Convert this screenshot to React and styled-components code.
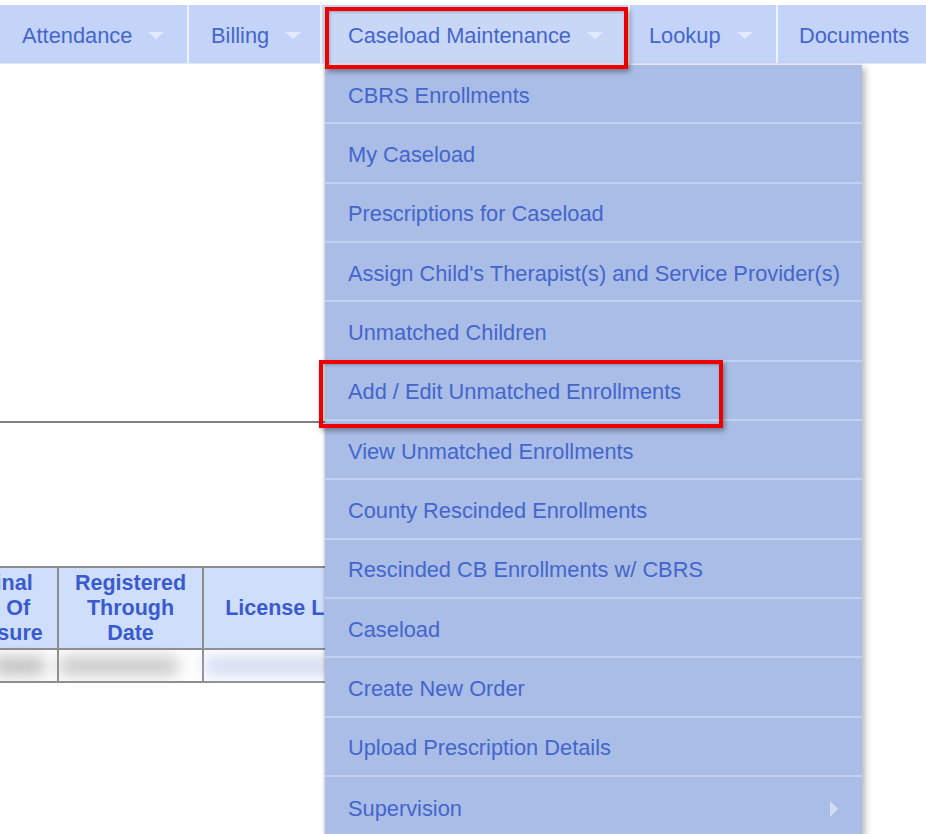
import styled, { createGlobalStyle } from 'styled-components';

const Global = createGlobalStyle`
    body {
        margin:0;
        background:#fff;
        font-family:"Liberation Sans", Arial, sans-serif;
    }
`
const Page = styled.div`
    position:relative;
    width:926px;
    height:834px;
    overflow:hidden;
    background:#fff;
`
const NavBar = styled.nav`
    margin-top:5px;
    height:58px;
    display:flex;
    gap:2px;
    background:#eef2fc;
    border-bottom:1px solid #dfe7fa;
`
const NavItem = styled.div`
    position:relative;
    box-sizing:border-box;
    flex:${props=>props.width ? `0 0 ${props.width}px` : '1'};
    display:flex;
    align-items:center;
    gap:16px;
    padding-left:${props=>props.pad || 22}px;
    padding-top:3px;
    background:${props=>props.active ? '#c9d7f7' : '#c4d4f8'};
    color:#4466cc;
    font-size:21.8px;
    white-space:nowrap;
`
const Caret = styled.span`
    width:0;
    height:0;
    border-left:8px solid transparent;
    border-right:8px solid transparent;
    border-top:7px solid #e3eafb;
`
const Highlight = styled.div`
    position:absolute;
    left:${props=>props.left}px;
    top:${props=>props.top}px;
    width:${props=>props.w}px;
    height:${props=>props.h}px;
    box-sizing:border-box;
    border:4px solid #ee0000;
    box-shadow:2px 3px 5px rgba(0,0,0,0.35), inset 1px 1px 3px rgba(0,0,0,0.25);
    pointer-events:none;
    z-index:3;
`
const Content = styled.main`
    padding-top:357px;
`
const Rule = styled.div`
    width:600px;
    height:2px;
    background:#7f7f7f;
`
const TableWrap = styled.div`
    margin-top:143px;
    overflow:hidden;
`
const Table = styled.table`
    margin-left:-75px;
    border-collapse:collapse;
    table-layout:fixed;
`
const Th = styled.th`
    width:${props=>props.width}px;
    height:82px;
    padding:0 4px;
    box-sizing:border-box;
    background:#cfdffb;
    border:2px solid #8c8c8c;
    color:#3a5ad0;
    font-size:21.5px;
    line-height:25px;
    font-weight:bold;
    text-align:center;
    white-space:${props=>props.nowrap ? 'nowrap' : 'normal'};
`
const Td = styled.td`
    height:31px;
    padding:0;
    border:2px solid #8c8c8c;
    border-top:none;
`
const Blur = styled.div`
    height:18px;
    margin:0 ${props=>props.right || 0}px 0 ${props=>props.left || 0}px;
    background:${props=>props.tone};
    filter:blur(8px);
    opacity:0.65;
`
const Menu = styled.ul`
    position:absolute;
    left:325px;
    top:65px;
    width:537px;
    margin:0;
    padding:0;
    list-style:none;
    background:#a9bde6;
    box-shadow:3px 3px 7px rgba(0,0,0,0.3), -1px 0 2px rgba(0,0,0,0.15);
    z-index:2;
`
const MenuItem = styled.li`
    position:relative;
    box-sizing:border-box;
    height:59.33px;
    display:flex;
    align-items:center;
    justify-content:space-between;
    padding:4px 24px 0 23px;
    border-bottom:2px solid #c3d1f1;
    color:#4466cc;
    font-size:21.8px;
    white-space:nowrap;
    &:last-child { border-bottom:none; }
`
const SubArrow = styled.span`
    width:0;
    height:0;
    border-top:8px solid transparent;
    border-bottom:8px solid transparent;
    border-left:8px solid #d3ddf5;
`

const navItems = [
    { label:'Attendance', width:187, caret:true },
    { label:'Billing', width:131, caret:true },
    { label:'Caseload Maintenance', width:306, caret:true, active:true, pad:26 },
    { label:'Lookup', width:146, caret:true, pad:19 },
    { label:'Documents', pad:21 },
]

const menuItems = [
    'CBRS Enrollments',
    'My Caseload',
    'Prescriptions for Caseload',
    "Assign Child's Therapist(s) and Service Provider(s)",
    'Unmatched Children',
    'Add / Edit Unmatched Enrollments',
    'View Unmatched Enrollments',
    'County Rescinded Enrollments',
    'Rescinded CB Enrollments w/ CBRS',
    'Caseload',
    'Create New Order',
    'Upload Prescription Details',
    'Supervision',
]

export default function App()
{
    return(
        <Page>
            <Global/>
            <NavBar>
                {navItems.map(item=>(
                    <NavItem key={item.label} width={item.width} active={item.active} pad={item.pad}>
                        {item.label}
                        {item.caret && <Caret/>}
                        {item.active && <Highlight left={3} top={2} w={303} h={62}/>}
                    </NavItem>
                ))}
            </NavBar>
            <Content>
                <Rule/>
                <TableWrap>
                    <Table>
                        <thead>
                            <tr>
                                <Th width={132}>Original Date Of Licensure</Th>
                                <Th width={145}>Registered Through Date</Th>
                                <Th width={220} nowrap>License Location</Th>
                            </tr>
                        </thead>
                        <tbody>
                            <tr>
                                <Td><Blur tone="#9a9a9a" left={66} right={12}/></Td>
                                <Td><Blur tone="#a8a8a8" left={0} right={24}/></Td>
                                <Td><Blur tone="#b9c4ea" left={0} right={24}/></Td>
                            </tr>
                        </tbody>
                    </Table>
                </TableWrap>
            </Content>
            <Menu>
                {menuItems.map(label=>(
                    <MenuItem key={label}>
                        {label}
                        {label === 'Supervision' && <SubArrow/>}
                        {label.startsWith('Add / Edit') && <Highlight left={-6} top={-2} w={404} h={68}/>}
                    </MenuItem>
                ))}
            </Menu>
        </Page>
    )
}
